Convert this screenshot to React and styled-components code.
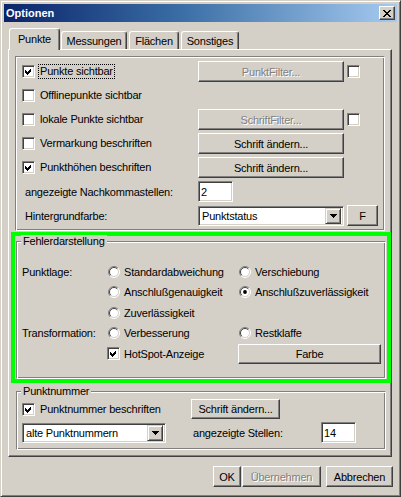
import React from "react";
import styled, { createGlobalStyle } from "styled-components";

const GlobalStyle = createGlobalStyle`
  html, body {
    margin: 0;
    background: #d4d0c8;
  }
  body {
    font-family: "Liberation Sans", Arial, sans-serif;
    font-size: 11px;
    letter-spacing: -0.2px;
    color: #000;
  }
  * {
    box-sizing: border-box;
  }
`;

const Window = styled.div`
  width: 401px;
  height: 497px;
  background: #d4d0c8;
  border: 1px solid;
  border-color: #d4d0c8 #404040 #404040 #d4d0c8;
  box-shadow: inset 1px 1px #fff, inset -1px -1px #808080;
  padding: 3px;
  display: flex;
  flex-direction: column;
`;

const TitleBar = styled.div`
  height: 18px;
  display: flex;
  align-items: center;
  justify-content: space-between;
  padding: 0 2px;
  background: linear-gradient(90deg, #0a246a 0%, #3a6ea5 45%, #a6caf0 100%);
`;

const Title = styled.span`
  color: #fff;
  font-weight: bold;
  letter-spacing: 0;
`;

const CloseButton = styled.span`
  width: 16px;
  height: 14px;
  display: flex;
  align-items: center;
  justify-content: center;
  background: #d4d0c8;
  border: 1px solid;
  border-color: #fff #404040 #404040 #fff;
  box-shadow: inset -1px -1px #808080;
`;

const TabStrip = styled.div`
  margin-top: 6px;
  height: 21px;
  display: flex;
  align-items: flex-end;
  padding-left: 5px;
`;

const Tab = styled.div`
  position: relative;
  z-index: ${(p) => (p.$active ? 1 : 0)};
  width: ${(p) => p.$w}px;
  height: ${(p) => (p.$active ? 22 : 18)}px;
  margin-left: ${(p) => p.$ml || 0}px;
  margin-bottom: ${(p) => (p.$active ? -1 : 0)}px;
  display: flex;
  align-items: center;
  justify-content: center;
  padding-bottom: ${(p) => (p.$active ? 2 : 0)}px;
  background: #d4d0c8;
  border-top: 1px solid #fff;
  border-left: 1px solid #fff;
  border-right: 1px solid #404040;
  border-radius: 3px 3px 0 0;
  box-shadow: inset -1px 0 #808080;
`;

const TabPanel = styled.div`
  margin-left: 4px;
  width: 384px;
  height: 408px;
  border: 1px solid;
  border-color: #fff #404040 #404040 #fff;
  box-shadow: inset -1px -1px #808080;
  padding: 6px;
  display: flex;
  flex-direction: column;
`;

const etched = `
  border: 1px solid;
  border-color: #808080 #fff #fff #808080;
  box-shadow: inset 1px 1px #fff, inset -1px -1px #808080;
`;

const InnerPanel = styled.div`
  ${etched}
  height: 176px;
  padding: 4px 0 0 6px;
  display: flex;
  flex-direction: column;
  gap: 3px;
`;

const Row = styled.div`
  height: 21px;
  display: flex;
  align-items: center;
`;

const LeftCell = styled.div`
  width: 176px;
  display: flex;
  align-items: center;
  padding-left: ${(p) => p.$indent || 0}px;
`;

const Label = styled.span`
  margin-left: 3px;
  padding: 0 1px;
  line-height: 13px;
  border: 1px dotted ${(p) => (p.$focus ? "#000" : "transparent")};
  white-space: nowrap;
`;

const Button = styled.button`
  width: ${(p) => p.$w}px;
  height: ${(p) => p.$h || 21}px;
  margin-left: ${(p) => p.$ml || 0}px;
  margin-right: ${(p) => p.$mr || 0}px;
  padding: 0;
  flex: none;
  background: #d4d0c8;
  border: 1px solid;
  border-color: #fff #404040 #404040 #fff;
  box-shadow: inset -1px -1px #808080;
  font: inherit;
  letter-spacing: inherit;
  color: ${(p) => (p.disabled ? "#808080" : "#000")};
  text-shadow: ${(p) => (p.disabled ? "1px 1px #fff" : "none")};
`;

const BoxFrame = styled.span`
  width: 13px;
  height: 13px;
  flex: none;
  margin-left: ${(p) => p.$ml || 0}px;
  display: inline-flex;
  align-items: center;
  justify-content: center;
  background: #fff;
  border: 1px solid;
  border-color: #808080 #fff #fff #808080;
  box-shadow: inset 1px 1px #404040, inset -1px -1px #d4d0c8;
`;

const CheckBox = ({ checked, ml }) => (
  <BoxFrame $ml={ml}>
    {checked && (
      <svg width="7" height="7" viewBox="0 0 7 7" shapeRendering="crispEdges">
        <polygon points="0,2 2,4 6,0 6,3 2,7 0,5" fill="#000" />
      </svg>
    )}
  </BoxFrame>
);

const RadioIcon = ({ checked }) => (
  <svg width="12" height="12" viewBox="0 0 12 12" style={{ flex: "none", marginLeft: 1 }}>
    <circle cx="6" cy="6" r="5" fill="#fff" />
    <path d="M2.1 9.9 A5.5 5.5 0 0 1 9.9 2.1" fill="none" stroke="#808080" />
    <path d="M9.9 2.1 A5.5 5.5 0 0 1 2.1 9.9" fill="none" stroke="#fff" />
    <path d="M2.8 9.2 A4.5 4.5 0 0 1 9.2 2.8" fill="none" stroke="#404040" />
    <path d="M9.2 2.8 A4.5 4.5 0 0 1 2.8 9.2" fill="none" stroke="#d4d0c8" />
    {checked && <circle cx="6" cy="6" r="1.9" fill="#000" />}
  </svg>
);

const Option = styled.div`
  display: flex;
  align-items: center;
`;

const OptionText = styled.span`
  margin-left: 4px;
  white-space: nowrap;
`;

const TextBox = styled.input`
  width: 35px;
  height: 21px;
  padding: 0 2px;
  background: #fff;
  border: 1px solid;
  border-color: #808080 #fff #fff #808080;
  box-shadow: inset 1px 1px #404040, inset -1px -1px #d4d0c8;
  font: inherit;
  letter-spacing: inherit;
  color: #000;
  outline: none;
`;

const Combo = styled.div`
  width: ${(p) => p.$w}px;
  height: 20px;
  flex: none;
  display: flex;
  align-items: center;
  padding: 2px;
  background: #fff;
  border: 1px solid;
  border-color: #808080 #fff #fff #808080;
  box-shadow: inset 1px 1px #404040, inset -1px -1px #d4d0c8;
`;

const ComboText = styled.span`
  flex: 1;
  padding-left: 1px;
  white-space: nowrap;
`;

const DropButton = styled.span`
  width: 16px;
  height: 16px;
  display: flex;
  align-items: center;
  justify-content: center;
  background: #d4d0c8;
  border: 1px solid;
  border-color: #d4d0c8 #404040 #404040 #d4d0c8;
  box-shadow: inset 1px 1px #fff, inset -1px -1px #808080;
`;

const GreenFrame = styled.div`
  margin: 1px 0 0 -4px;
  width: 380px;
  border: 4px solid #00ff00;
  padding: 5px 1px 0 1px;
`;

const GroupBox = styled.div`
  ${etched}
  width: 370px;
  height: ${(p) => p.$h}px;
  margin-top: ${(p) => p.$mt || 0}px;
  margin-left: ${(p) => p.$ml || 0}px;
  padding-left: 5px;
`;

const Legend = styled.div`
  width: fit-content;
  margin: -7px 0 0 -1px;
  padding: 0 2px;
  line-height: 13px;
  background: #d4d0c8;
`;

const ErrorGrid = styled.div`
  margin-top: 13px;
  display: grid;
  grid-template-columns: 85px 131px 143px;
  grid-template-rows: 21px 20px 21px 20px 21px;
  align-items: center;
`;

const NumberGrid = styled.div`
  margin-top: 1px;
  display: grid;
  grid-template-columns: 169px 130px 35px;
  grid-template-rows: 20px 21px;
  row-gap: 3px;
  align-items: center;
`;

const Cell = styled.div`
  display: flex;
  align-items: center;
  padding-left: ${(p) => p.$indent || 0}px;
  white-space: nowrap;
`;

const ButtonBar = styled.div`
  margin-top: 9px;
  display: flex;
  justify-content: flex-end;
  padding-right: 4px;
`;

const Arrow = () => (
  <svg width="7" height="4" viewBox="0 0 7 4" shapeRendering="crispEdges">
    <polygon points="0,0 7,0 3.5,4" fill="#000" />
  </svg>
);

const CloseIcon = () => (
  <svg width="8" height="7" viewBox="0 0 8 7" shapeRendering="crispEdges">
    <path d="M0 0h2l2 2.5L6 0h2L5 3.5 8 7H6L4 4.5 2 7H0l3-3.5z" fill="#000" />
  </svg>
);

const Radio = ({ checked, children }) => (
  <Option>
    <RadioIcon checked={checked} />
    <OptionText>{children}</OptionText>
  </Option>
);

export default function App() {
  return (
    <>
      <GlobalStyle />
      <Window>
        <TitleBar>
          <Title>Optionen</Title>
          <CloseButton>
            <CloseIcon />
          </CloseButton>
        </TitleBar>

        <TabStrip>
          <Tab $active $w={51}>Punkte</Tab>
          <Tab $w={66} $ml={1}>Messungen</Tab>
          <Tab $w={50} $ml={2}>Flächen</Tab>
          <Tab $w={58} $ml={2}>Sonstiges</Tab>
        </TabStrip>

        <TabPanel>
          <InnerPanel>
            <Row>
              <LeftCell>
                <CheckBox checked />
                <Label $focus>Punkte sichtbar</Label>
              </LeftCell>
              <Button $w={146} disabled>PunktFilter...</Button>
              <CheckBox ml={3} />
            </Row>
            <Row>
              <LeftCell>
                <CheckBox />
                <Label>Offlinepunkte sichtbar</Label>
              </LeftCell>
            </Row>
            <Row>
              <LeftCell>
                <CheckBox />
                <Label>lokale Punkte sichtbar</Label>
              </LeftCell>
              <Button $w={146} disabled>SchriftFilter...</Button>
              <CheckBox ml={3} />
            </Row>
            <Row>
              <LeftCell>
                <CheckBox />
                <Label>Vermarkung beschriften</Label>
              </LeftCell>
              <Button $w={146}>Schrift ändern...</Button>
            </Row>
            <Row>
              <LeftCell>
                <CheckBox checked />
                <Label>Punkthöhen beschriften</Label>
              </LeftCell>
              <Button $w={146}>Schrift ändern...</Button>
            </Row>
            <Row>
              <LeftCell $indent={3}>angezeigte Nachkommastellen:</LeftCell>
              <TextBox readOnly value="2" />
            </Row>
            <Row>
              <LeftCell $indent={3}>Hintergrundfarbe:</LeftCell>
              <Combo $w={146}>
                <ComboText>Punktstatus</ComboText>
                <DropButton>
                  <Arrow />
                </DropButton>
              </Combo>
              <Button $w={31} $ml={3}>F</Button>
            </Row>
          </InnerPanel>

          <GreenFrame>
            <GroupBox $h={138}>
              <Legend>Fehlerdarstellung</Legend>
              <ErrorGrid>
                <Cell>Punktlage:</Cell>
                <Radio>Standardabweichung</Radio>
                <Radio>Verschiebung</Radio>

                <Cell />
                <Radio>Anschlußgenauigkeit</Radio>
                <Radio checked>Anschlußzuverlässigkeit</Radio>

                <Cell />
                <Radio>Zuverlässigkeit</Radio>
                <Cell />

                <Cell>Transformation:</Cell>
                <Radio>Verbesserung</Radio>
                <Radio>Restklaffe</Radio>

                <Cell />
                <Option>
                  <CheckBox checked />
                  <OptionText>HotSpot-Anzeige</OptionText>
                </Option>
                <Button $w={143} $h={20}>Farbe</Button>
              </ErrorGrid>
            </GroupBox>
          </GreenFrame>

          <GroupBox $h={59} $mt={8} $ml={1}>
            <Legend>Punktnummer</Legend>
            <NumberGrid>
              <Cell>
                <CheckBox checked />
                <Label>Punktnummer beschriften</Label>
              </Cell>
              <Button $w={89} $h={20}>Schrift ändern...</Button>
              <Cell />

              <Combo $w={144}>
                <ComboText>alte Punktnummern</ComboText>
                <DropButton>
                  <Arrow />
                </DropButton>
              </Combo>
              <Cell $indent={2}>angezeigte Stellen:</Cell>
              <TextBox readOnly value="14" />
            </NumberGrid>
          </GroupBox>
        </TabPanel>

        <ButtonBar>
          <Button $w={28} $mr={1}>OK</Button>
          <Button $w={79} $mr={5} disabled>Übernehmen</Button>
          <Button $w={67}>Abbrechen</Button>
        </ButtonBar>
      </Window>
    </>
  );
}
